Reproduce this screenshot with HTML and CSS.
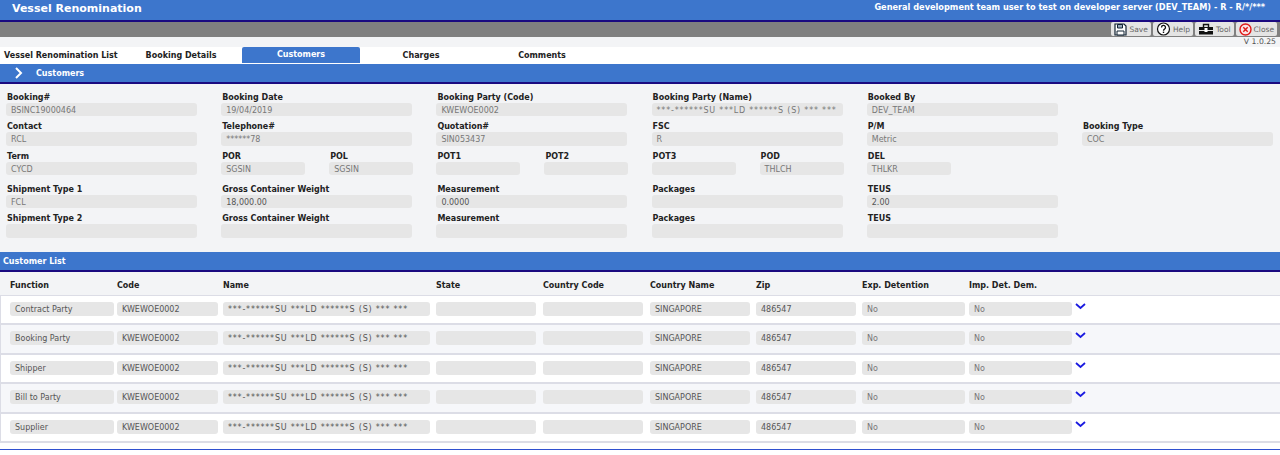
FILE: index.html
```html
<!DOCTYPE html>
<html lang="en">
<head>
  <meta charset="UTF-8">
  <title>Vessel Renomination</title>
  <link rel="stylesheet" href="styles.css">
</head>
<body>
  <div class="top-bar">
    <h1>Vessel Renomination</h1>
    <p>General development team user to test on developer server (DEV_TEAM) - R - R/*/***</p>
  </div>

  <div class="tool-bar">
    <button class="tool-btn">
      <svg width="13" height="13" viewBox="0 0 13 13"><path d="M1 1h9l2 2v9H1z" fill="#fff" stroke="#123" stroke-width="1.2"/><path d="M3.500 1.500h5v3.500h-5z" fill="#9ab" stroke="#123"/><path d="M3 8h7v4H3z" fill="#fff" stroke="#123"/></svg>
      Save
    </button>
    <button class="tool-btn">
      <svg width="15" height="14" viewBox="0 0 14 14"><circle cx="7" cy="7" r="6" fill="#fff" stroke="#111" stroke-width="1.2"/><path d="M5 5.400a2 2 0 1 1 3 1.700c-.7.400-1 .8-1 1.600" fill="none" stroke="#111" stroke-width="1.300"/><rect x="6.300" y="9.600" width="1.400" height="1.400" fill="#111"/></svg>
      Help
    </button>
    <button class="tool-btn">
      <svg width="16" height="12" viewBox="0 0 14 12"><path d="M4.500 4V1.500h5V4" fill="none" stroke="#111" stroke-width="1.400"/><path d="M0 4h14v3H0zM0 8h14v3.500H0z" fill="#111"/><rect x="5.500" y="5" width="3" height="4" fill="#fff"/></svg>
      Tool
    </button>
    <button class="tool-btn">
      <svg width="13" height="13" viewBox="0 0 13 13"><circle cx="6.500" cy="6.500" r="5.500" fill="#fbe4e4" stroke="#e01818" stroke-width="1.400"/><path d="M4.300 4.300l4.400 4.400M8.700 4.300l-4.400 4.400" stroke="#e01818" stroke-width="1.400"/></svg>
      Close
    </button>
  </div>

  <div class="version">V 1.0.25</div>

  <div class="tabs">
    <a class="tab tab-first">Vessel Renomination List</a>
    <a class="tab tab-details">Booking Details</a>
    <a class="tab tab-active">Customers</a>
    <a class="tab tab-charges">Charges</a>
    <a class="tab tab-comments">Comments</a>
  </div>

  <div class="section-bar">
    <svg width="9" height="12" viewBox="0 0 9 12"><path d="M2 1l5 5-5 5" fill="none" stroke="#fff" stroke-width="2"/></svg>
    <span>Customers</span>
  </div>

  <div class="form">
    <div class="form-row">
      <div class="field"><label>Booking#</label><div class="val">BSINC19000464</div></div>
      <div class="field"><label>Booking Date</label><div class="val">19/04/2019</div></div>
      <div class="field"><label>Booking Party (Code)</label><div class="val">KWEWOE0002</div></div>
      <div class="field"><label>Booking Party (Name)</label><div class="val mask">***-******SU ***LD ******S (S) *** ***</div></div>
      <div class="field"><label>Booked By</label><div class="val">DEV_TEAM</div></div>
    </div>
    <div class="form-row">
      <div class="field"><label>Contact</label><div class="val tall">RCL</div></div>
      <div class="field"><label>Telephone#</label><div class="val tall">******78</div></div>
      <div class="field"><label>Quotation#</label><div class="val tall">SIN053437</div></div>
      <div class="field"><label>FSC</label><div class="val tall">R</div></div>
      <div class="field"><label>P/M</label><div class="val tall">Metric</div></div>
      <div class="field"><label>Booking Type</label><div class="val tall">COC</div></div>
    </div>
    <div class="form-row">
      <div class="field"><label>Term</label><div class="val">CYCD</div></div>
      <div class="split">
        <div class="field"><label>POR</label><div class="val">SGSIN</div></div>
        <div class="field"><label>POL</label><div class="val">SGSIN</div></div>
      </div>
      <div class="split">
        <div class="field"><label>POT1</label><div class="val"></div></div>
        <div class="field"><label>POT2</label><div class="val"></div></div>
      </div>
      <div class="split">
        <div class="field"><label>POT3</label><div class="val"></div></div>
        <div class="field"><label>POD</label><div class="val">THLCH</div></div>
      </div>
      <div class="split">
        <div class="field"><label>DEL</label><div class="val">THLKR</div></div>
      </div>
    </div>
    <div class="form-row row-gap">
      <div class="field"><label>Shipment Type 1</label><div class="val">FCL</div></div>
      <div class="field"><label>Gross Container Weight</label><div class="val dark">18,000.00</div></div>
      <div class="field"><label>Measurement</label><div class="val dark">0.0000</div></div>
      <div class="field"><label>Packages</label><div class="val"></div></div>
      <div class="field"><label>TEUS</label><div class="val dark">2.00</div></div>
    </div>
    <div class="form-row">
      <div class="field"><label>Shipment Type 2</label><div class="val tall"></div></div>
      <div class="field"><label>Gross Container Weight</label><div class="val tall"></div></div>
      <div class="field"><label>Measurement</label><div class="val tall"></div></div>
      <div class="field"><label>Packages</label><div class="val tall"></div></div>
      <div class="field"><label>TEUS</label><div class="val tall"></div></div>
    </div>
  </div>

  <div class="list-bar">Customer List</div>

  <div class="list">
    <div class="list-row list-head">
      <span>Function</span><span>Code</span><span>Name</span><span>State</span><span>Country Code</span><span>Country Name</span><span>Zip</span><span>Exp. Detention</span><span>Imp. Det. Dem.</span>
    </div>
    <div class="list-row item">
      <div class="val dark">Contract Party</div><div class="val dark">KWEWOE0002</div><div class="val dark mask">***-******SU ***LD ******S (S) *** ***</div><div class="val"></div><div class="val"></div><div class="val dark">SINGAPORE</div><div class="val dark">486547</div><div class="val">No</div><div class="val">No</div>
      <svg class="chev" width="11" height="7" viewBox="0 0 11 7"><path d="M1 1l4.500 4L10 1" fill="none" stroke="#1a1ae0" stroke-width="1.800"/></svg>
    </div>
    <div class="list-row item">
      <div class="val dark">Booking Party</div><div class="val dark">KWEWOE0002</div><div class="val dark mask">***-******SU ***LD ******S (S) *** ***</div><div class="val"></div><div class="val"></div><div class="val dark">SINGAPORE</div><div class="val dark">486547</div><div class="val">No</div><div class="val">No</div>
      <svg class="chev" width="11" height="7" viewBox="0 0 11 7"><path d="M1 1l4.500 4L10 1" fill="none" stroke="#1a1ae0" stroke-width="1.800"/></svg>
    </div>
    <div class="list-row item">
      <div class="val dark">Shipper</div><div class="val dark">KWEWOE0002</div><div class="val dark mask">***-******SU ***LD ******S (S) *** ***</div><div class="val"></div><div class="val"></div><div class="val dark">SINGAPORE</div><div class="val dark">486547</div><div class="val">No</div><div class="val">No</div>
      <svg class="chev" width="11" height="7" viewBox="0 0 11 7"><path d="M1 1l4.500 4L10 1" fill="none" stroke="#1a1ae0" stroke-width="1.800"/></svg>
    </div>
    <div class="list-row item">
      <div class="val dark">Bill to Party</div><div class="val dark">KWEWOE0002</div><div class="val dark mask">***-******SU ***LD ******S (S) *** ***</div><div class="val"></div><div class="val"></div><div class="val dark">SINGAPORE</div><div class="val dark">486547</div><div class="val">No</div><div class="val">No</div>
      <svg class="chev" width="11" height="7" viewBox="0 0 11 7"><path d="M1 1l4.500 4L10 1" fill="none" stroke="#1a1ae0" stroke-width="1.800"/></svg>
    </div>
    <div class="list-row item">
      <div class="val dark">Supplier</div><div class="val dark">KWEWOE0002</div><div class="val dark mask">***-******SU ***LD ******S (S) *** ***</div><div class="val"></div><div class="val"></div><div class="val dark">SINGAPORE</div><div class="val dark">486547</div><div class="val">No</div><div class="val">No</div>
      <svg class="chev" width="11" height="7" viewBox="0 0 11 7"><path d="M1 1l4.500 4L10 1" fill="none" stroke="#1a1ae0" stroke-width="1.800"/></svg>
    </div>
  </div>
  <div class="foot-line"></div>
</body>
</html>
```
FILE: styles.css
```css
html, body {
  margin: 0;
  padding: 0;
  height: 100%;
  background: #fff;
  font-family: 'DejaVu Sans', Verdana, sans-serif;
  font-size: 8px;
  color: #222;
  overflow: hidden;
}
.top-bar {
  display: flex;
  justify-content: space-between;
  align-items: center;
  height: 20px;
  padding: 0 15px 4px 12px;
  box-sizing: border-box;
  background: #3d76cc;
  color: #fff;
}
.top-bar h1 {
  margin: 0;
  font-size: 11px;
}
.top-bar p {
  margin: 0 0 3px;
  font-size: 8.200px;
  font-weight: bold;
}
.tool-bar {
  display: flex;
  justify-content: flex-end;
  gap: 2px;
  height: 15px;
  padding-right: 3px;
  background: #808080;
  border-top: 2px solid #1a0a80;
}
.tool-btn {
  display: flex;
  align-items: center;
  gap: 2px;
  height: 14px;
  padding: 0 3px;
  border: none;
  border-radius: 2px;
  background: #e4e4e4;
  color: #666;
  font-family: inherit;
  font-size: 7.500px;
}
.version {
  height: 10px;
  padding-right: 4px;
  line-height: 10px;
  text-align: right;
  font-size: 7.700px;
  color: #555;
  background: #f3f4f6;
}
.tabs {
  display: flex;
  height: 17px;
  background: #fff;
  font-weight: bold;
}
.tab {
  line-height: 18px;
  text-align: center;
  white-space: nowrap;
}
.tab-first { width: 118px; padding-left: 4px; text-align: left; }
.tab-details { width: 118px; padding-right: 2px; }
.tab-active {
  width: 118px;
  height: 16px;
  line-height: 16px;
  border-radius: 2px 2px 0 0;
  background: #3d76cc;
  color: #fff;
}
.tab-charges { width: 122px; }
.tab-comments { width: 120px; }
.section-bar {
  display: flex;
  align-items: center;
  gap: 13px;
  height: 18px;
  padding-left: 14px;
  background: #3d76cc;
  border-bottom: 2px solid #1a0a80;
  color: #fff;
  font-weight: bold;
}
.form {
  height: 168px;
  box-sizing: border-box;
  padding: 8px 6px 0;
  background: #f3f4f6;
}
.form-row {
  display: grid;
  grid-template-columns: repeat(6, 191px);
  column-gap: 24.200px;
  margin-bottom: 5px;
}
.row-gap {
  margin-top: 9px;
}
.split {
  display: grid;
  grid-template-columns: 84px 84px;
  column-gap: 24px;
}
.field label {
  display: block;
  height: 11px;
  padding-left: 1px;
  line-height: 11px;
  font-weight: bold;
  white-space: nowrap;
}
.val {
  height: 13px;
  padding-left: 5px;
  overflow: hidden;
  border-radius: 3px;
  background: #e6e6e6;
  color: #777;
  line-height: 15px;
  white-space: nowrap;
}
.val.tall {
  height: 14px;
}
.val.dark {
  color: #555;
}
/* the masked strings run wider than plain text in the original font */
.val.mask {
  letter-spacing: 0.8px;
}
.list-bar {
  height: 18px;
  padding-left: 3px;
  background: #3d76cc;
  border-bottom: 2px solid #1a0a80;
  color: #fff;
  font-weight: bold;
  line-height: 20px;
}
.list {
  background: #f3f4f6;
}
.list-row {
  display: grid;
  grid-template-columns: 107px 106px 213px 107px 107px 106px 106px 107px 106px 11px;
  padding-left: 10px;
  box-sizing: border-box;
}
.list-head {
  height: 24px;
  border-bottom: 1px solid #dcdde6;
  font-weight: bold;
  line-height: 27px;
}
.item {
  height: 29.400px;
  padding-top: 6px;
  padding-left: 9px;
  background: #fff;
  border-left: 1px solid #dcdde6;
  border-bottom: 2px solid #dcdde6;
}
.item:nth-child(odd) {
  background: #f6f7fa;
}
.item .val {
  height: 14px;
  margin-right: 6px;
}
.item .val:nth-child(1), .item .val:nth-child(9) {
  margin-right: 3px;
}
.item .val:nth-child(4), .item .val:nth-child(5) {
  margin-right: 7px;
}
.item .val:nth-child(2) {
  margin-right: 5px;
}
.item .val:nth-child(8) {
  margin-right: 4px;
}
.chev {
  margin-top: 1px;
}
.foot-line {
  height: 1px;
  margin-top: 6px;
  background: #3050d0;
}
```
